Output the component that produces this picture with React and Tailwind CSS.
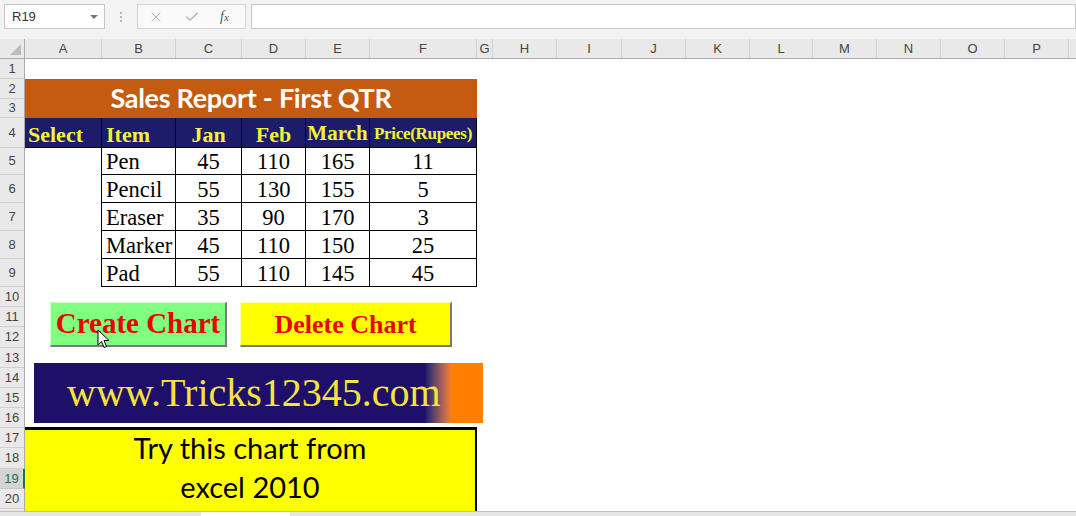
import { X, Check } from 'lucide-react';

const columns = [
    { name: 'A', w: 'w-[77px]' },
    { name: 'B', w: 'w-[74px]' },
    { name: 'C', w: 'w-[66px]' },
    { name: 'D', w: 'w-[64px]' },
    { name: 'E', w: 'w-[64px]' },
    { name: 'F', w: 'w-[107px]' },
    { name: 'G', w: 'w-[16px]' },
    { name: 'H', w: 'w-[64px]' },
    { name: 'I', w: 'w-[65px]' },
    { name: 'J', w: 'w-[64px]' },
    { name: 'K', w: 'w-[64px]' },
    { name: 'L', w: 'w-[63px]' },
    { name: 'M', w: 'w-[64px]' },
    { name: 'N', w: 'w-[64px]' },
    { name: 'O', w: 'w-[64px]' },
    { name: 'P', w: 'w-[64px]' },
];

const rowHeights = [
    'h-[20px]', 'h-[20px]', 'h-[19px]', 'h-[30px]', 'h-[27px]', 'h-[28px]', 'h-[28px]', 'h-[28px]', 'h-[28px]',
    'h-[20px]', 'h-[20px]', 'h-[21px]', 'h-[20px]', 'h-[20px]', 'h-[20px]', 'h-[20px]', 'h-[20px]', 'h-[21px]',
    'h-[20px]', 'h-[20px]',
];

const items = [
    { name: 'Pen', jan: 45, feb: 110, march: 165, price: 11, h: 'h-[27px]' },
    { name: 'Pencil', jan: 55, feb: 130, march: 155, price: 5, h: 'h-[28px]' },
    { name: 'Eraser', jan: 35, feb: 90, march: 170, price: 3, h: 'h-[28px]' },
    { name: 'Marker', jan: 45, feb: 110, march: 150, price: 25, h: 'h-[28px]' },
    { name: 'Pad', jan: 55, feb: 110, march: 145, price: 45, h: 'h-[28px]' },
];

function FormulaBar() {
    return (
        <div className="h-[39px] bg-[#f3f3f3] flex items-start pt-[4px] pl-[4px] gap-[5px]">
            <div className="w-[101px] h-[25px] bg-white border border-[#c6c6c6] flex items-center justify-between pl-[7px] pr-[6px] text-[13px] text-[#333]">
                <span>R19</span>
                <span className="w-0 h-0 border-l-[4px] border-r-[4px] border-t-[4px] border-l-transparent border-r-transparent border-t-[#777]" />
            </div>
            <div className="w-[22px] h-[25px] flex flex-col items-center justify-center gap-[2px]">
                <span className="w-[2px] h-[2px] bg-[#b8b8b8]" />
                <span className="w-[2px] h-[2px] bg-[#b8b8b8]" />
                <span className="w-[2px] h-[2px] bg-[#b8b8b8]" />
            </div>
            <div className="w-[109px] h-[25px] bg-[#fafafa] border border-[#d4d4d4] flex items-center pl-[10px] gap-[20px]">
                <X size={16} strokeWidth={1.5} className="text-[#b5b5b5]" />
                <Check size={16} strokeWidth={2} className="text-[#b5b5b5]" />
                <span className="font-['Liberation_Serif'] italic text-[14px] text-[#555] leading-none">
                    f<span className="text-[11px]">x</span>
                </span>
            </div>
            <div className="flex-1 h-[25px] bg-white border border-[#c6c6c6]" />
        </div>
    );
}

function ColumnHeader() {
    return (
        <div className="h-[20px] flex bg-[#e9e9e9] border-b border-[#ababab] text-[13px] text-[#444]">
            <div className="w-[25px] shrink-0 border-r border-[#ababab] flex items-end justify-end p-[3px]">
                <span className="w-0 h-0 border-l-[11px] border-t-[11px] border-l-transparent border-t-transparent border-b-0 border-r-0 [border-bottom:11px_solid_#bdbdbd]" />
            </div>
            {columns.map((c) => (
                <div key={c.name} className={`${c.w} shrink-0 border-r border-[#d0d0d0] flex items-center justify-center`}>
                    {c.name}
                </div>
            ))}
            <div className="flex-1" />
        </div>
    );
}

function RowHeaders() {
    return (
        <div className="w-[25px] shrink-0 flex flex-col bg-[#e9e9e9] border-r border-[#ababab] text-[13px] text-[#444]">
            {rowHeights.map((h, i) =>
                i + 1 === 19 ? (
                    <div
                        key={i}
                        className={`${h} shrink-0 flex items-center justify-center bg-[#d4d4d4] text-[#217346] border-b border-[#c6c6c6] border-r-2 border-r-[#217346] -mr-px`}
                    >
                        {i + 1}
                    </div>
                ) : (
                    <div key={i} className={`${h} shrink-0 flex items-center justify-center border-b border-[#cfcfcf]`}>
                        {i + 1}
                    </div>
                ),
            )}
        </div>
    );
}

function SalesTable() {
    const head = "flex items-center pt-[3px] font-['Liberation_Serif'] font-bold text-[#f2f23a] border-r border-black";
    const cell = "flex items-center justify-center pt-[3px] border-r border-b border-black";
    return (
        <div className="w-[452px] flex flex-col">
            <div className="h-[39px] bg-[#c55a11] flex items-center justify-center font-['Lato'] font-bold text-[27px] text-white tracking-[-0.3px]">
                Sales Report - First QTR
            </div>
            <div className="h-[30px] flex bg-[#1c1c6b] border-b border-black">
                <div className={`${head} w-[77px] pl-[3px] text-[22px]`}>Select</div>
                <div className={`${head} w-[74px] pl-[4px] text-[22px]`}>Item</div>
                <div className={`${head} w-[66px] justify-center text-[22px]`}>Jan</div>
                <div className={`${head} w-[64px] justify-center text-[22px]`}>Feb</div>
                <div className={`${head} w-[64px] justify-center text-[21px]`}>March</div>
                <div className={`${head} w-[107px] justify-center text-[17px] tracking-[-0.3px]`}>Price(Rupees)</div>
            </div>
            {items.map((it) => (
                <div key={it.name} className={`${it.h} flex font-['Liberation_Serif'] text-[22.5px] text-black leading-none`}>
                    <div className="w-[77px] border-r border-black" />
                    <div className="w-[74px] flex items-center pl-[4px] pt-[3px] border-r border-b border-black">{it.name}</div>
                    <div className={`w-[66px] ${cell}`}>{it.jan}</div>
                    <div className={`w-[64px] ${cell}`}>{it.feb}</div>
                    <div className={`w-[64px] ${cell}`}>{it.march}</div>
                    <div className={`w-[107px] ${cell}`}>{it.price}</div>
                </div>
            ))}
        </div>
    );
}

function Cursor() {
    return (
        <svg className="absolute left-[97px] top-[329px]" width="13" height="20" viewBox="0 0 13 20">
            <path d="M1 1 L1 16 L4.5 12.5 L7 18.5 L9.5 17.5 L7 11.5 L12 11.5 Z" fill="white" stroke="black" strokeWidth="1" strokeLinejoin="round" />
        </svg>
    );
}

function App() {
    return (
        <div className="relative w-[1076px] h-[516px] overflow-hidden bg-white font-['Liberation_Sans',sans-serif]">
            <FormulaBar />
            <ColumnHeader />
            <div className="h-[452px] flex overflow-hidden">
                <RowHeaders />
                <div className="flex-1 flex flex-col">
                    <div className="h-[20px] shrink-0" />
                    <SalesTable />

                    <div className="mt-[15px] h-[45px] flex shrink-0">
                        <div className="ml-[25px] w-[177px] bg-[#80ff80] border-t border-l border-t-[#c8ffc8] border-l-[#c8ffc8] border-r-2 border-b-2 border-r-[#7a7a7a] border-b-[#7a7a7a] flex items-center justify-center font-['Liberation_Serif'] font-bold text-[29px] text-[#ee0000]">
                            Create Chart
                        </div>
                        <div className="ml-[13px] w-[212px] bg-[#ffff00] border-t border-l border-t-[#ffffb0] border-l-[#ffffb0] border-r-2 border-b-2 border-r-[#7a7a7a] border-b-[#7a7a7a] flex items-center justify-center font-['Liberation_Serif'] font-bold text-[26px] text-[#ee0000]">
                            Delete Chart
                        </div>
                    </div>

                    <div className="mt-[16px] ml-[9px] w-[449px] h-[60px] shrink-0 bg-linear-to-r from-[#1e0f6b] from-[87%] to-[#ff7f00] to-[93%] flex items-center pl-[33px] font-['Liberation_Serif'] text-[40px] text-[#f6e43c] leading-none">
                        www.Tricks12345.com
                    </div>

                    <div className="mt-[4px] w-[452px] flex-1 bg-[#ffff00] border-t-[3px] border-r-2 border-black flex flex-col items-center -space-y-[1px] font-['Lato'] text-[29px] text-black leading-[40px]">
                        <span className="-mt-[2px]">Try this chart from</span>
                        <span>excel 2010</span>
                    </div>
                </div>
            </div>
            <div className="h-[5px] flex bg-[#e6e6e6] border-t border-[#bdbdbd]">
                <div className="ml-[201px] w-[89px] bg-white" />
            </div>
            <Cursor />
        </div>
    );
}

export default App;
